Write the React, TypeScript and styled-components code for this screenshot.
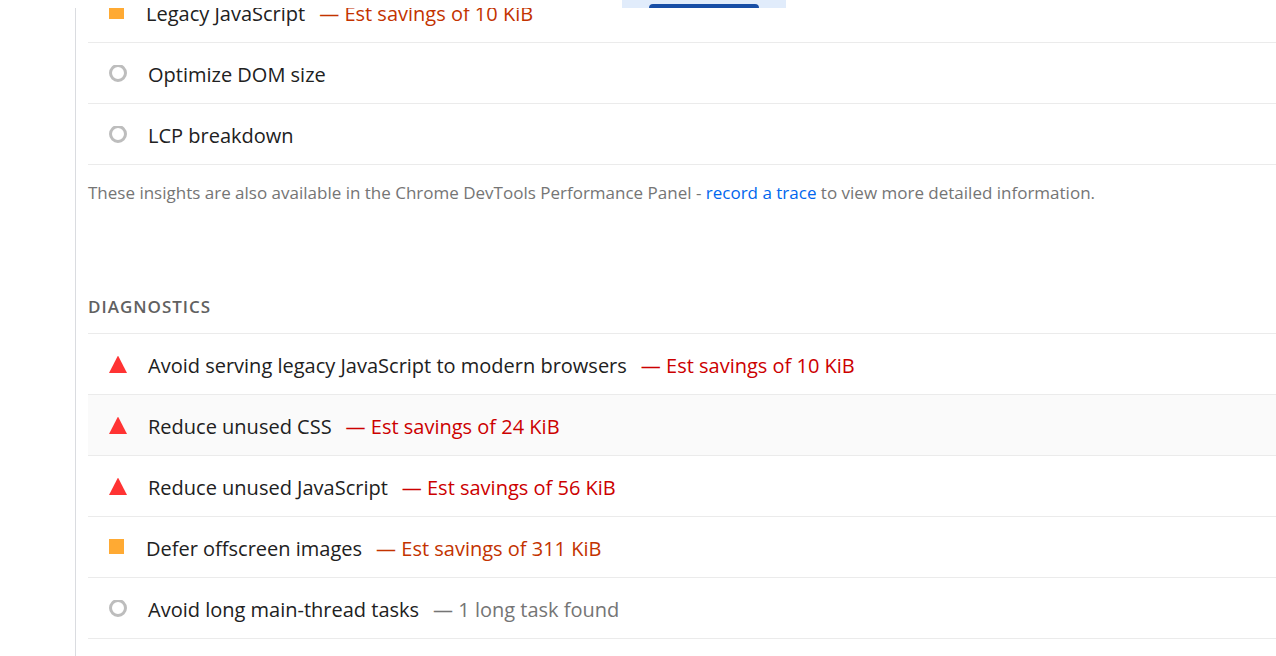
import React from "react";
import styled, { createGlobalStyle } from "styled-components";

const Global = createGlobalStyle`
  * { box-sizing: border-box; }
  body { margin: 0; background: #fff; color: #212121; font-family: "Segoe UI", "Open Sans", "Noto Sans", sans-serif; overflow: hidden; }
`;

const Page = styled.div`
  padding-top: 8px;
  height: 100vh;
  display: flex;
  flex-direction: column;
  position: relative;
`;
const ActiveTab = styled.div`
  position: absolute;
  top: 0;
  left: 622px;
  width: 164px;
  height: 8px;
  background: #e1ecfb;
  &::after {
    content: "";
    position: absolute;
    left: 27px;
    right: 27px;
    bottom: 0;
    height: 4px;
    border-radius: 4px 4px 0 0;
    background: #174ea6;
  }
`;
const Report = styled.main`
  flex: 1;
  min-height: 0;
  overflow: hidden;
  margin-left: 75px;
  padding-left: 12px;
  border-left: 1px solid #dadce0;
`;
const Audits = styled.ul<{ $scrolled?: boolean }>`
  list-style: none;
  margin: ${(p) => (p.$scrolled ? "-27px" : "0")} 0 0;
  padding: 0;
  border-top: 1px solid #ebebeb;
`;
const Row = styled.li<{ $active?: boolean }>`
  display: flex;
  align-items: center;
  height: 61px;
  padding: 4px 0 0 20px;
  border-bottom: 1px solid #ebebeb;
  background: ${(p) => (p.$active ? "#fafafa" : "transparent")};
  font-size: 20px;
  line-height: 28px;
  white-space: nowrap;
`;
const Marker = styled.svg<{ $narrow?: boolean }>`
  flex: none;
  width: ${(p) => (p.$narrow ? "18px" : "20px")};
  height: 20px;
  margin-right: 20px;
`;
const Savings = styled.span<{ $tone: string }>`
  margin-left: 14px;
  color: ${(p) => p.$tone};
`;
const Note = styled.p`
  margin: 16px 0 0;
  font-size: 17px;
  line-height: 24px;
  color: #757575;
`;
const TraceLink = styled.a`
  color: #06e;
  text-decoration: none;
`;
const Heading = styled.h2`
  margin: 90px 0 14px;
  font-size: 17px;
  line-height: 24px;
  font-weight: 600;
  letter-spacing: 1px;
  color: #616161;
`;

type Kind = "fail" | "average" | "info";
const tones: Record<Kind, string> = { fail: "#c00", average: "#c33300", info: "#757575" };

function Audit({ kind, title, detail, active }: { kind: Kind; title: string; detail?: string; active?: boolean }) {
  return (
    <Row $active={active}>
      <Marker viewBox={kind === "average" ? "0 1 18 20" : "0 1 20 20"} $narrow={kind === "average"} aria-hidden="true">
        {kind === "fail" && <path d="M10 0.5L19 18H1Z" fill="#f33" />}
        {kind === "average" && <rect x="1" y="1" width="15" height="15" fill="#fa3" />}
        {kind === "info" && <circle cx="10" cy="9" r="7.5" fill="none" stroke="#bdbdbd" strokeWidth="3" />}
      </Marker>
      <span>{title}</span>
      {detail && <Savings $tone={tones[kind]}>— {detail}</Savings>}
    </Row>
  );
}

export default function App() {
  return (
    <Page>
      <Global />
      <ActiveTab />
      <Report>
        <Audits $scrolled>
          <Audit kind="average" title="Legacy JavaScript" detail="Est savings of 10 KiB" />
          <Audit kind="info" title="Optimize DOM size" />
          <Audit kind="info" title="LCP breakdown" />
        </Audits>
        <Note>
          These insights are also available in the Chrome DevTools Performance Panel - <TraceLink href="#trace">record a trace</TraceLink> to view more detailed information.
        </Note>
        <Heading>DIAGNOSTICS</Heading>
        <Audits>
          <Audit kind="fail" title="Avoid serving legacy JavaScript to modern browsers" detail="Est savings of 10 KiB" />
          <Audit kind="fail" title="Reduce unused CSS" detail="Est savings of 24 KiB" active />
          <Audit kind="fail" title="Reduce unused JavaScript" detail="Est savings of 56 KiB" />
          <Audit kind="average" title="Defer offscreen images" detail="Est savings of 311 KiB" />
          <Audit kind="info" title="Avoid long main-thread tasks" detail="1 long task found" />
        </Audits>
      </Report>
    </Page>
  );
}
